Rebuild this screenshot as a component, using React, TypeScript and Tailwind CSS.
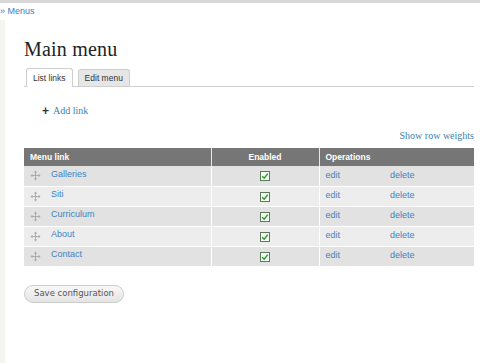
import React from "react";

const rows = ["Galleries", "Siti", "Curriculum", "About", "Contact"];

function Handle() {
  return (
    <svg width="11" height="11" viewBox="0 0 11 11" className="block">
      <g stroke="#ababab" strokeWidth="1" fill="none">
        <line x1="5.5" y1="1.5" x2="5.5" y2="9.5" />
        <line x1="1.5" y1="5.5" x2="9.5" y2="5.5" />
      </g>
      <g fill="#ababab">
        <polygon points="5.5,0.5 3.8,2.5 7.2,2.5" />
        <polygon points="5.5,10.5 3.8,8.5 7.2,8.5" />
        <polygon points="0.5,5.5 2.5,3.8 2.5,7.2" />
        <polygon points="10.5,5.5 8.5,3.8 8.5,7.2" />
      </g>
    </svg>
  );
}

function Check() {
  return (
    <span className="inline-flex items-center justify-center w-[10px] h-[10px] border border-[#5a7a5a] bg-[#f4fbf4]">
      <svg width="8" height="8" viewBox="0 0 8 8">
        <path d="M1.2 4.2 L3.2 6.2 L6.8 1.6" stroke="#2e9a2e" strokeWidth="1.5" fill="none" />
      </svg>
    </span>
  );
}

export default function App() {
  return (
    <div className="relative w-[480px] h-[363px] bg-white overflow-hidden" style={{ fontFamily: '"Liberation Sans", Arial, sans-serif' }}>
      <div className="h-[3px] bg-[#d8d8d8]" />
      <div className="flex">
        <div className="w-[5px] mt-[17px] h-[343px] bg-[#f4f4f0]" />
        <div className="flex-1">
          <div className="absolute left-0 top-[6px] text-[9px] leading-[10px] text-[#3a7fc0]">» Menus</div>
          <div className="pl-[19px] pr-[6px] pt-[33px]">
            <h1 className="text-[20px] leading-[26px] text-[#222] tracking-[0.2px]" style={{ fontFamily: '"Liberation Serif", "Times New Roman", serif' }}>
              Main menu
            </h1>
            <div className="mt-[6px] flex items-end border-b border-[#cfcfcf] h-[19px] pl-[2px]">
              <div className="h-[19px] px-[6px] border border-b-0 border-[#cfcfcf] bg-white rounded-t-[3px] text-[8.5px] leading-[18px] text-[#333] -mb-px">
                List links
              </div>
              <div className="ml-[5px] h-[17px] px-[6px] border border-b-0 border-[#cfcfcf] bg-[#e6e6e6] rounded-t-[3px] text-[8.5px] leading-[17px] text-[#333]">
                Edit menu
              </div>
            </div>
            <div className="mt-[18px] pl-[18px] text-[10px] leading-[12px] text-[#3a7fb0] flex items-center" style={{ fontFamily: '"Liberation Serif", "Times New Roman", serif' }}>
              <span className="text-[#333] font-black text-[12px] leading-[12px] mr-[4px]" style={{ fontFamily: '"Liberation Sans", Arial, sans-serif' }}>+</span>Add link
            </div>
            <div className="mt-[13px] text-right text-[10px] leading-[12px] text-[#3a7fb0]" style={{ fontFamily: '"Liberation Serif", "Times New Roman", serif' }}>
              Show row weights
            </div>
            <table className="mt-[6px] w-[450px] border-collapse text-[8.5px]">
              <thead>
                <tr className="bg-[#767676] text-white font-bold h-[18px]">
                  <th className="text-left pl-[6px] w-[187px] border-r border-[#e8e8e8]">Menu link</th>
                  <th className="text-center w-[108px] border-r border-[#e8e8e8]">Enabled</th>
                  <th className="text-left pl-[6px]" colSpan={2}>Operations</th>
                </tr>
              </thead>
              <tbody>
                {rows.map((r, i) => (
                  <tr key={r} className={(i % 2 === 0 ? "bg-[#e2e2e2]" : "bg-[#ededed]") + " h-[20px] border-b border-white"}>
                    <td className="border-r border-white pl-[6px]">
                      <div className="flex items-center">
                        <Handle />
                        <span className="ml-[10px] text-[#3d84c0] text-[9px] -mt-[3px]">{r}</span>
                      </div>
                    </td>
                    <td className="border-r border-white text-center">
                      <div className="flex justify-center pt-[1px]"><Check /></div>
                    </td>
                    <td className="pl-[6px] w-[71px] text-[#3d84c0] text-[9px]">edit</td>
                    <td className="text-[#3d84c0] text-[9px]">delete</td>
                  </tr>
                ))}
              </tbody>
            </table>
            <button
              className="mt-[18px] h-[18px] w-[100px] rounded-full border border-[#cccccc] bg-gradient-to-b from-[#f8f8f8] to-[#e4e4e4] text-[8.5px] text-[#555]"
              style={{ fontFamily: '"DejaVu Sans", Verdana, sans-serif' }}
            >
              Save configuration
            </button>
          </div>
        </div>
      </div>
    </div>
  );
}
